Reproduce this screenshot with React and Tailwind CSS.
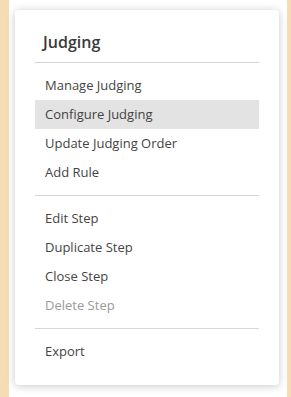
export default function App() {
  const Item = ({ children, active, disabled }) => (
    <div
      className={`h-[29px] flex items-center px-[10px] text-[13px] ${active ? "bg-[#e3e3e3]" : ""} ${disabled ? "text-[#9a9a9a]" : "text-[#444]"}`}
    >
      {children}
    </div>
  );
  return (
    <div className="flex h-[397px] w-[291px] overflow-hidden" style={{ fontFamily: '"Open Sans", sans-serif' }}>
      <div className="w-[9px] shrink-0 bg-[#f5dcb5]" />
      <div className="flex-1 bg-white pt-[10px] pl-[6px] pr-[8px]">
        <div className="h-[375px] rounded-[4px] bg-white shadow-[0_1px_8px_rgba(0,0,0,0.22)] px-[20px] pt-[20px]">
          <div className="px-[8px] h-[24px] flex items-center text-[16px] font-semibold text-[#3a3a3a] mb-[8px]">Judging</div>
          <div className="border-t border-[#d6d6d6] py-[8px]">
            <Item>Manage Judging</Item>
            <Item active>Configure Judging</Item>
            <Item>Update Judging Order</Item>
            <Item>Add Rule</Item>
          </div>
          <div className="border-t border-[#d6d6d6] py-[8px]">
            <Item>Edit Step</Item>
            <Item>Duplicate Step</Item>
            <Item>Close Step</Item>
            <Item disabled>Delete Step</Item>
          </div>
          <div className="border-t border-[#d6d6d6] pt-[8px]">
            <Item>Export</Item>
          </div>
        </div>
      </div>
      <div className="w-[4px] shrink-0 bg-[#f5dcb5]" />
    </div>
  );
}
